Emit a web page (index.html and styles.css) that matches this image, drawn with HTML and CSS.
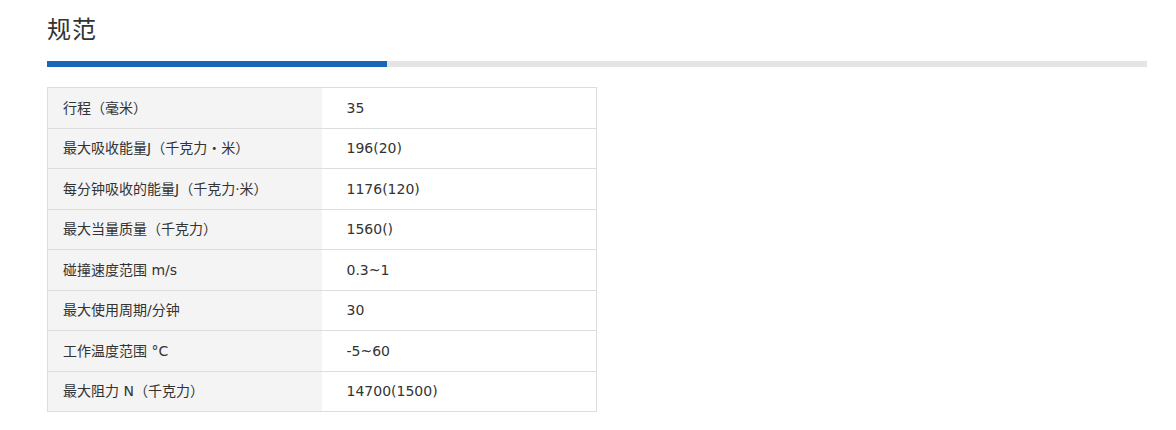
FILE: index.html
```html
<!DOCTYPE html>
<html lang="zh">
<head>
<meta charset="utf-8">
<link rel="stylesheet" href="styles.css">
</head>
<body>
<div class="page">
  <h2 class="title">规范</h2>
  <div class="bar"><div class="bar-fill"></div></div>
  <table class="spec">
    <tr><td class="label">行程（毫米）</td><td class="value">35</td></tr>
    <tr><td class="label">最大吸收能量J（千克力・米）</td><td class="value">196(20)</td></tr>
    <tr><td class="label">每分钟吸收的能量J（千克力·米）</td><td class="value">1176(120)</td></tr>
    <tr><td class="label">最大当量质量（千克力）</td><td class="value">1560()</td></tr>
    <tr><td class="label">碰撞速度范围 m/s</td><td class="value">0.3~1</td></tr>
    <tr><td class="label">最大使用周期/分钟</td><td class="value">30</td></tr>
    <tr><td class="label">工作温度范围 °C</td><td class="value">-5~60</td></tr>
    <tr><td class="label">最大阻力 N（千克力）</td><td class="value">14700(1500)</td></tr>
  </table>
</div>
</body>
</html>
```

FILE: styles.css
```css
html, body {
  margin: 0;
  padding: 0;
  background: #fff;
}
.page {
  padding: 10px 29px 0 47px;
  font-family: "DejaVu Sans", "Noto Sans CJK SC", sans-serif;
  color: #333;
}
.title {
  margin: 0;
  font-family: "Noto Sans CJK SC", sans-serif;
  font-weight: 400;
  font-size: 24px;
  line-height: 36px;
  color: #333;
  letter-spacing: 1px;
}
.bar {
  margin-top: 15px;
  height: 6px;
  background: #e5e5e5;
}
.bar-fill {
  width: 340px;
  height: 6px;
  background: #1a66b8;
}
.spec {
  margin-top: 20px;
  border-collapse: collapse;
  width: 550px;
  font-size: 14px;
}
.spec td {
  border: 1px solid #dddddd;
  height: 40.5px;
  padding: 0;
  box-sizing: border-box;
  vertical-align: middle;
  line-height: 20px;
}
.spec .label {
  width: 274px;
  background: #f4f4f4;
  padding-left: 15px;
  border-right: none;
}
.spec .value {
  padding-left: 25px;
  background: #fff;
  border-left: none;
}
```
